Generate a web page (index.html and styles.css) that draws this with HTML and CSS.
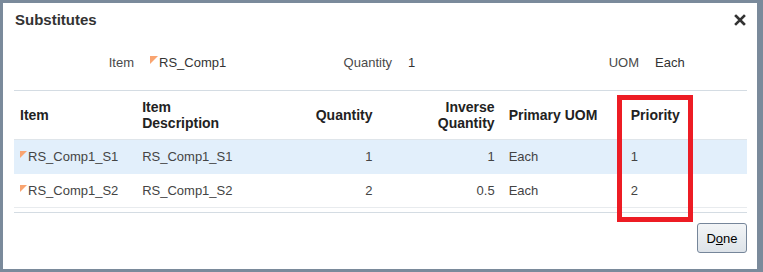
FILE: index.html
```html
<!DOCTYPE html>
<html lang="en">
<head>
  <meta charset="UTF-8" />
  <title>Substitutes</title>
  <link rel="stylesheet" href="styles.css">
</head>
<body>

<div class="dialog">
  <header class="dialog-head">
    <h1>Substitutes</h1>
    <button class="close" title="Close">
      <svg width="12" height="12" viewBox="0 0 12 12">
        <path d="M2 2 L10 10 M10 2 L2 10" stroke="#333" stroke-width="2.6" stroke-linecap="square"/>
      </svg>
    </button>
  </header>

  <div class="summary">
    <span class="lbl">Item</span>
    <span class="val"><span class="flag"></span>RS_Comp1</span>
    <span class="lbl">Quantity</span>
    <span class="val">1</span>
    <span class="lbl">UOM</span>
    <span class="val">Each</span>
  </div>

  <div class="tabla-wrap">
    <table class="tabla">
      <thead>
        <tr>
          <th>Item</th>
          <th>Item<br>Description</th>
          <th class="num">Quantity</th>
          <th class="num">Inverse<br>Quantity</th>
          <th>Primary UOM</th>
          <th>Priority</th>
        </tr>
      </thead>
      <tbody>
        <tr class="selected">
          <td class="item"><span class="flag"></span>RS_Comp1_S1</td>
          <td>RS_Comp1_S1</td>
          <td class="num">1</td>
          <td class="num">1</td>
          <td>Each</td>
          <td>1</td>
        </tr>
        <tr>
          <td class="item"><span class="flag"></span>RS_Comp1_S2</td>
          <td>RS_Comp1_S2</td>
          <td class="num">2</td>
          <td class="num">0.5</td>
          <td>Each</td>
          <td>2</td>
        </tr>
      </tbody>
    </table>
  </div>

  <div class="acciones">
    <button class="btn-done">D<u>o</u>ne</button>
  </div>

  <!-- marca roja sobre la columna Priority -->
  <div class="highlight"></div>
</div>

</body>
</html>
```

FILE: styles.css
```css
* { box-sizing: border-box; }

body {
  margin: 0;
  background: #7a8a9b;
  font-family: 'Liberation Sans', Arial, sans-serif;
  color: #333;
}

.dialog {
  position: relative;
  margin: 3px 6px 0 3px;
  height: 266px;
  background: white;
}

.dialog-head {
  display: flex;
  justify-content: space-between;
  align-items: flex-start;
  padding: 8px 11px 0 12px;
}

.dialog-head h1 {
  margin: 0;
  font-size: 15px;
  line-height: 17px;
  font-weight: bold;
  color: #333;
}

.close {
  border: none;
  background: none;
  padding: 0;
  margin-top: 3px;
  width: 12px;
  height: 12px;
  cursor: pointer;
}

.close svg { display: block; }

.summary {
  display: grid;
  grid-template-columns: 120px 146px 80px 155px 60px auto;
  column-gap: 16px;
  padding-left: 11px;
  margin-top: 27px;
  font-size: 13px;
  line-height: 16px;
}

.summary .lbl {
  text-align: right;
  color: #4a4a4a;
}

.summary .val {
  color: #333;
}

.flag {
  display: inline-block;
  width: 8px;
  height: 8px;
  background: #f9a470;
  clip-path: polygon(0 0, 100% 0, 0 100%);
  vertical-align: top;
  margin-top: 1px;
  margin-right: 1px;
}

.tabla-wrap {
  margin: 19px 10px 0 11px;
  border-top: 1px solid #d4dce3;
  border-bottom: 1px solid #d4dce3;
  padding-bottom: 4px;
}

.tabla {
  width: 100%;
  table-layout: fixed;
  border-collapse: separate;
  border-spacing: 0;
}

.tabla th {
  height: 49px;
  padding: 0 6px 0 6px;
  text-align: left;
  font-size: 14px;
  line-height: 16px;
  font-weight: bold;
  color: #222;
  vertical-align: middle;
  border-bottom: 1px solid #dfe5ea;
}

.tabla td {
  height: 34px;
  padding: 0 6px 0 6px;
  font-size: 13px;
  color: #444;
  border-bottom: 1px solid #e8ebee;
}

.tabla .num { padding-right: 8px; text-align: right; }

.tabla td.item { padding-left: 6px; }

.tabla td.item .flag {
  width: 7px;
  height: 7px;
  margin-top: 2px;
  margin-right: 1px;
}

.tabla tr.selected td {
  background: #e2effb;
  border-bottom-color: #e2effb;
}

.acciones {
  display: flex;
  justify-content: flex-end;
  padding: 10px 10px 0 0;
}

.btn-done {
  width: 50px;
  height: 30px;
  border: 1px solid #76869a;
  border-radius: 3px;
  background: linear-gradient(#f3f5f7, #dde3e9);
  font-family: 'Liberation Sans', Arial, sans-serif;
  font-size: 13px;
  color: #000;
  padding: 0;
}

.highlight {
  position: absolute;
  left: 614px;
  top: 92px;
  width: 76px;
  height: 127px;
  border: 5px solid #ed1c24;
}
```
